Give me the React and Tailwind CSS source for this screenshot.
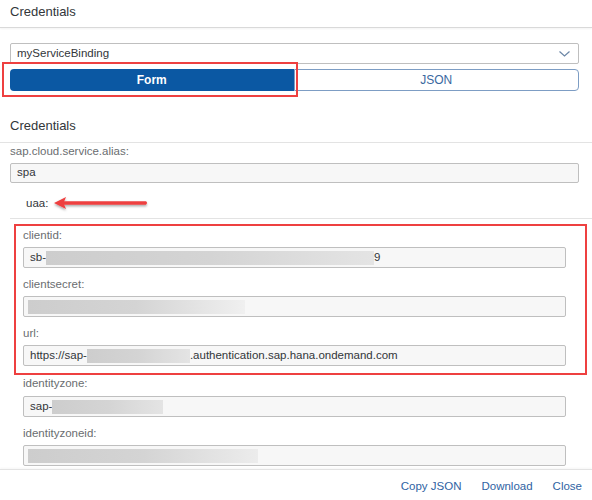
import React from 'react';

const blur = 'inline-block h-[14px] align-middle bg-linear-to-r from-[#cdcdcd] via-[#d4d4d4] to-[#e4e4e4]';

const Input = ({ children }) => (
  <div className="flex h-[21px] items-center overflow-hidden whitespace-nowrap rounded-[2px] border border-[#bfbfbf] bg-[#f7f7f7] px-[6px] text-[11.5px] text-[#32363a]">
    {children}
  </div>
);

const Label = ({ children, className = 'pt-[9px] pb-[5px]' }) => (
  <div className={`text-[11.5px] leading-[14px] text-[#6a6d70] ${className}`}>{children}</div>
);

const fields = [
  {
    label: 'clientid:',
    value: (
      <>
        <span>sb-</span>
        <span className={`${blur} w-[328px]`} />
        <span>9</span>
      </>
    )
  },
  { label: 'clientsecret:', value: <span className={`${blur} -ml-[2px] w-[217px] to-[#f0f0f0]`} /> },
  {
    label: 'url:',
    value: (
      <>
        <span>https://sap-</span>
        <span className={`${blur} w-[103px]`} />
        <span>.authentication.sap.hana.ondemand.com</span>
      </>
    )
  },
  {
    label: 'identityzone:',
    pad: 'pt-[10px] pb-[6px]',
    value: (
      <>
        <span>sap-</span>
        <span className={`${blur} w-[111px]`} />
      </>
    )
  },
  { label: 'identityzoneid:', value: <span className={`${blur} -ml-[2px] w-[230px] to-[#ececec]`} /> }
];

export default function App() {
  return (
    <div className="relative flex h-[500px] w-[592px] flex-col overflow-hidden bg-white font-['Liberation_Sans',Arial,sans-serif]">
      <div className="h-[28px] shrink-0 border-b border-[#d9d9d9] px-[10px] pt-[4px] text-[13px] leading-[16px] text-[#32363a] shadow-[0_1px_2px_rgba(0,0,0,0.05)]">
        Credentials
      </div>

      <div className="flex-1 overflow-hidden pl-[10px] pr-[13px]">
        <div className="mt-[15px] flex h-[21px] items-center justify-between rounded-[2px] border border-[#bfbfbf] bg-white pl-[6px] pr-[8px] text-[11.5px] text-[#32363a]">
          <span>myServiceBinding</span>
          <svg width="11" height="6" viewBox="0 0 11 6" fill="none">
            <path d="M0.5 0.5 L5.5 5 L10.5 0.5" stroke="#6b86a6" strokeWidth="1.2" />
          </svg>
        </div>

        <div className="mt-[5px] flex h-[22px] text-[12px]">
          <div className="flex flex-1 items-center justify-center rounded-l-[4px] bg-[#0b58a3] font-semibold text-white">Form</div>
          <div className="flex flex-1 items-center justify-center rounded-r-[4px] border border-[#7d9dc4] text-[#3a68a0]">JSON</div>
        </div>

        <div className="-ml-[10px] -mr-[13px] border-b border-[#e3e3e3] px-[10px] pt-[27px] pb-[8px] text-[13px] leading-[16px] text-[#32363a]">
          Credentials
        </div>

        <Label className="pt-[1px] pb-[5px]">sap.cloud.service.alias:</Label>
        <div className="flex h-[20px] items-center rounded-[2px] border border-[#bfbfbf] bg-[#f7f7f7] px-[6px] text-[11.5px] text-[#32363a]">
          spa
        </div>

        <div className="-mr-[13px] border-b border-[#e3e3e3] pt-[13px] pb-[8px] pl-[16px] text-[11.5px] leading-[14px] text-[#32363a]">
          uaa:
        </div>

        <div className="px-[13px]">
          {fields.map((f) => (
            <div key={f.label}>
              <Label className={f.pad || 'pt-[9px] pb-[5px]'}>{f.label}</Label>
              <Input>{f.value}</Input>
            </div>
          ))}
        </div>
      </div>

      <div className="flex h-[31px] shrink-0 items-center justify-end gap-[20px] border-t border-[#e3e3e3] pt-[3px] pr-[10px] text-[11.5px] text-[#2f63a3] shadow-[0_-1px_2px_rgba(0,0,0,0.04)]">
        <span>Copy JSON</span>
        <span>Download</span>
        <span>Close</span>
      </div>

      {/* annotations */}
      <div className="pointer-events-none absolute left-[2px] top-[62px] h-[35px] w-[296px] border-2 border-[#ee4040]" />
      <div className="pointer-events-none absolute left-[14px] top-[224px] h-[151px] w-[573px] border-2 border-[#ee4040]" />
      <svg className="pointer-events-none absolute left-[50px] top-[194px]" width="104" height="20" viewBox="0 0 104 20">
        <defs>
          <filter id="sh" x="-10%" y="-50%" width="120%" height="200%">
            <feDropShadow dx="0" dy="1.5" stdDeviation="1.2" floodColor="#000" floodOpacity="0.35" />
          </filter>
        </defs>
        <g filter="url(#sh)">
          <path d="M12 7.3 L96 7.3 Q98 9 96 10.7 L12 10.7 Z" fill="#ee4040" />
          <path d="M4 9 L16 3 L13.5 9 L16 15 Z" fill="#ee4040" />
        </g>
      </svg>
    </div>
  );
}
